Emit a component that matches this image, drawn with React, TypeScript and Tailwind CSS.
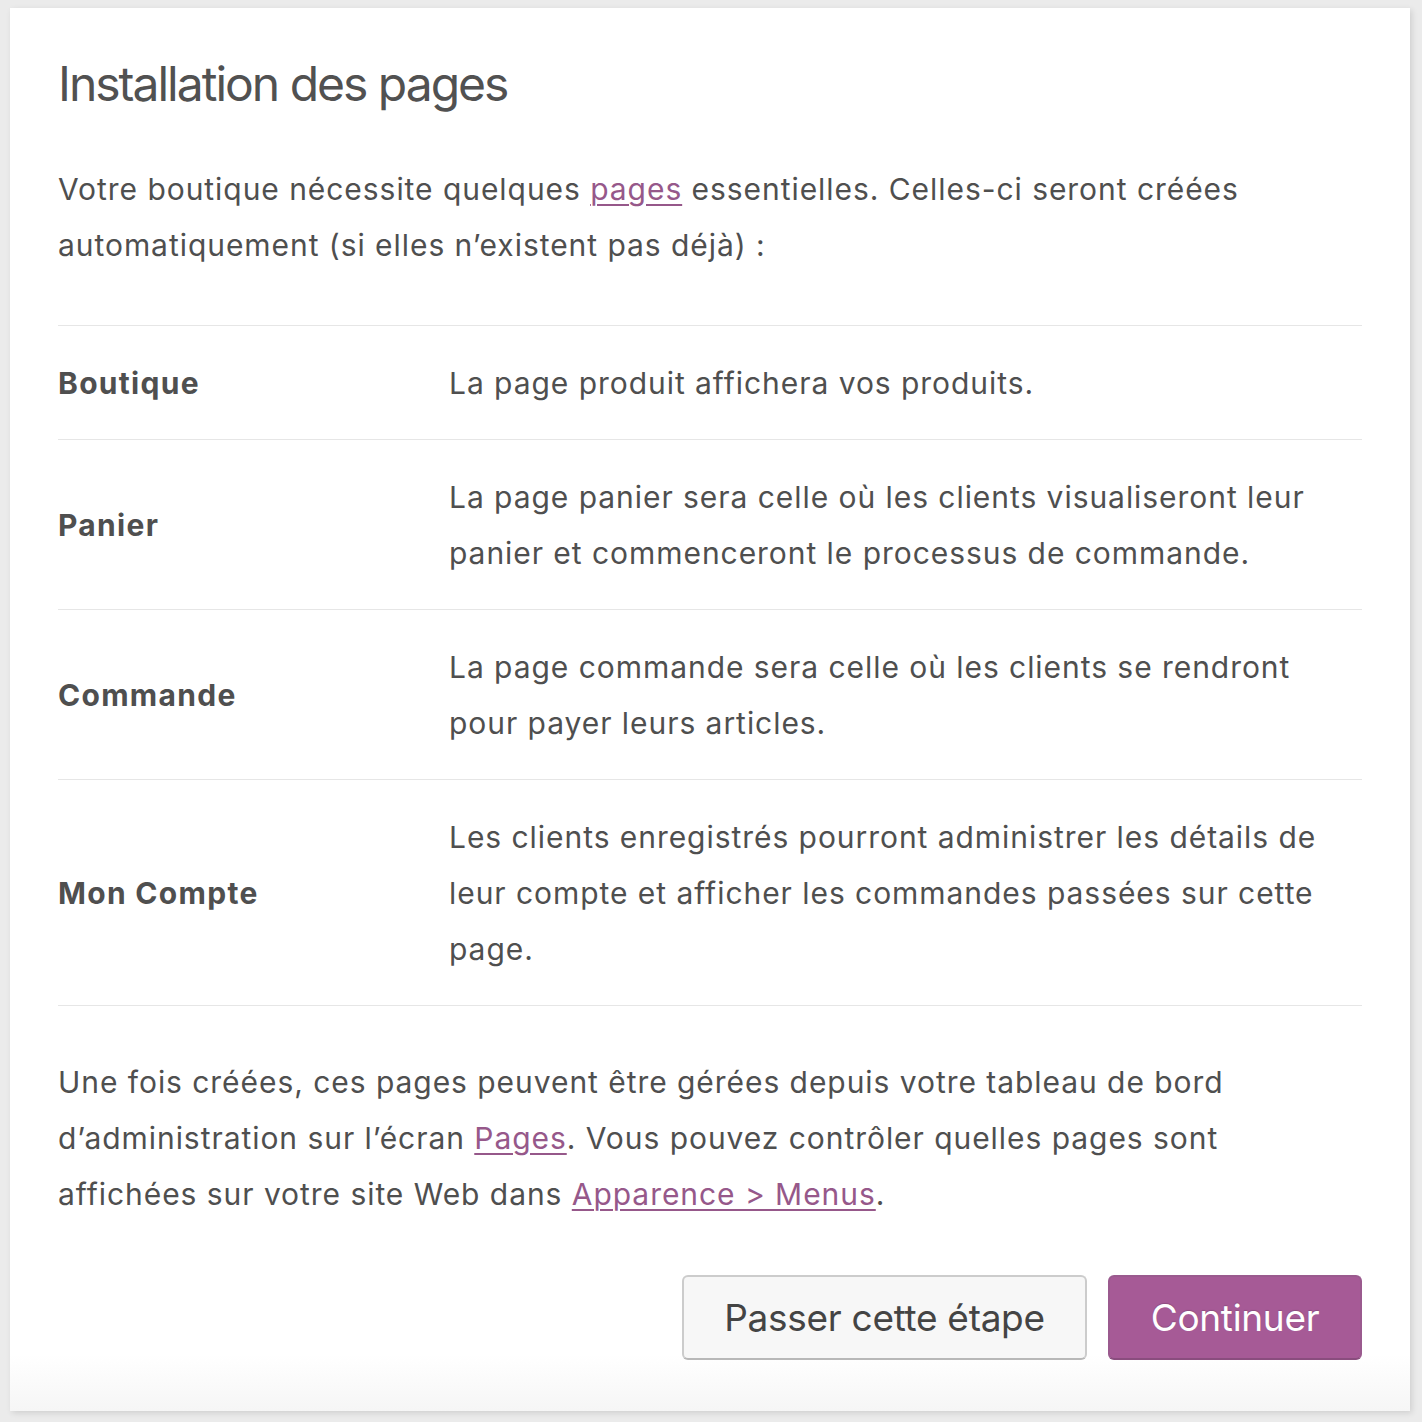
import React from "react";

const Link = ({ children }: { children: React.ReactNode }) => (
  <a className="text-[#96588a] underline decoration-[2px] underline-offset-[4px]" href="#">
    {children}
  </a>
);

const rows: { label: string; lines: string[] }[] = [
  { label: "Boutique", lines: ["La page produit affichera vos produits."] },
  {
    label: "Panier",
    lines: [
      "La page panier sera celle où les clients visualiseront leur",
      "panier et commenceront le processus de commande.",
    ],
  },
  {
    label: "Commande",
    lines: [
      "La page commande sera celle où les clients se rendront",
      "pour payer leurs articles.",
    ],
  },
  {
    label: "Mon Compte",
    lines: [
      "Les clients enregistrés pourront administrer les détails de",
      "leur compte et afficher les commandes passées sur cette",
      "page.",
    ],
  },
];

export default function App() {
  return (
    <div
      className="min-h-[1422px] w-[1422px] bg-[#ebebeb] pt-[8px] pl-[10px]"
      style={{ fontFamily: "Inter, 'Noto Sans', sans-serif" }}
    >
      <div className="w-[1400px] bg-[linear-gradient(to_bottom,#ffffff_96%,#f6f6f6)] px-[48px] pt-[48px] pb-[51px] text-[#4f4f4f] shadow-[2px_2px_6px_rgba(0,0,0,0.12)]">
        <h1 className="text-[48px] leading-[56px] font-normal tracking-[-2px] text-[#515151]">
          Installation des pages
        </h1>
        <p className="mt-[49px] text-[30px] leading-[56px] tracking-[0.95px]">
          Votre boutique nécessite quelques <Link>pages</Link> essentielles. Celles-ci seront créées
          <br />
          automatiquement (si elles n’existent pas déjà) :
        </p>
        <div className="mt-[52px] border-t border-[#e6e6e6]">
          {rows.map((r) => (
            <div key={r.label} className="flex items-center border-b border-[#e6e6e6] pt-[29px] pb-[28px]">
              <div className="w-[391px] shrink-0 text-[30px] leading-[56px] font-bold tracking-[1.3px]">
                {r.label}
              </div>
              <div className="flex-1 text-[30px] leading-[56px] tracking-[0.95px]">
                {r.lines.map((l, i) => (
                  <div key={i} className="whitespace-nowrap">
                    {l}
                  </div>
                ))}
              </div>
            </div>
          ))}
        </div>
        <p className="mt-[48px] text-[30px] leading-[56px] tracking-[0.95px]">
          Une fois créées, ces pages peuvent être gérées depuis votre tableau de bord
          <br />
          d’administration sur l’écran <Link>Pages</Link>. Vous pouvez contrôler quelles pages sont
          <br />
          affichées sur votre site Web dans <Link>Apparence &gt; Menus</Link>.
        </p>
        <div className="mt-[53px] flex justify-end gap-[21px]">
          <button className="h-[85px] w-[405px] rounded-[6px] border-[2px] border-[#cccccc] border-b-[#b8b8b8] bg-[#f7f7f7] text-[37px] leading-[78px] text-[#444] tracking-[-0.3px]">
            Passer cette étape
          </button>
          <button className="h-[85px] w-[254px] rounded-[6px] border-[2px] border-[#9a5a8e] border-b-[#8a4d7e] bg-[#a65a96] text-[37px] leading-[78px] text-white tracking-[-0.3px] [text-shadow:0_-1px_1px_rgba(0,0,0,0.15)]">
            Continuer
          </button>
        </div>
      </div>
    </div>
  );
}
